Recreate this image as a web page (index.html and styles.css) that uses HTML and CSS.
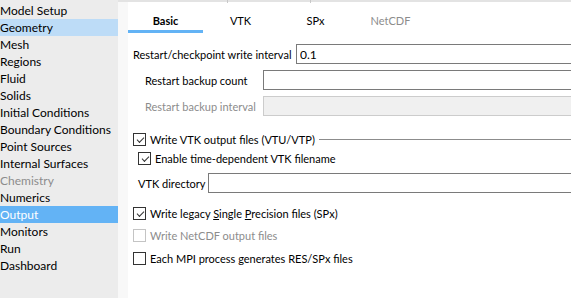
FILE: index.html
```html
<!DOCTYPE html>
<html lang="en">
<head>
  <meta charset="UTF-8">
  <title>Output</title>
  <link rel="stylesheet" href="styles.css">
</head>
<body>
  <div class="sidebar">
    <div class="nav-item">Model Setup</div>
    <div class="nav-item hover">Geometry</div>
    <div class="nav-item">Mesh</div>
    <div class="nav-item">Regions</div>
    <div class="nav-item">Fluid</div>
    <div class="nav-item">Solids</div>
    <div class="nav-item">Initial Conditions</div>
    <div class="nav-item">Boundary Conditions</div>
    <div class="nav-item">Point Sources</div>
    <div class="nav-item">Internal Surfaces</div>
    <div class="nav-item disabled">Chemistry</div>
    <div class="nav-item">Numerics</div>
    <div class="nav-item selected">Output</div>
    <div class="nav-item">Monitors</div>
    <div class="nav-item">Run</div>
    <div class="nav-item">Dashboard</div>
  </div>
  <div class="gutter"></div>
  <div class="main">
    <div class="tabs">
      <div class="tab active">Basic</div>
      <div class="tab">VTK</div>
      <div class="tab">SPx</div>
      <div class="tab disabled">NetCDF</div>
    </div>
    <div class="form">
      <div class="field-row first">
        <label class="label-wide">Restart/checkpoint write interval</label>
        <input class="text-input" type="text" value="0.1">
      </div>
      <div class="field-row indent">
        <label class="label-narrow">Restart backup count</label>
        <input class="text-input" type="text" value="">
      </div>
      <div class="field-row indent">
        <label class="label-narrow disabled">Restart backup interval</label>
        <input class="text-input" type="text" value="" disabled>
      </div>

      <div class="check-row group vtk">
        <span class="box checked"></span>
        <span class="check-text">Write VTK output files (VTU/VTP)</span>
        <span class="group-line"></span>
      </div>
      <div class="check-row sub">
        <span class="box checked"></span>
        <span class="check-text">Enable time-dependent VTK filename</span>
      </div>
      <div class="field-row dir">
        <label class="label-dir">VTK directory</label>
        <input class="text-input" type="text" value="">
      </div>

      <div class="check-row spx">
        <span class="box checked"></span>
        <span class="check-text">Write legacy <u>S</u>ingle <u>P</u>recision files (SPx)</span>
      </div>
      <div class="check-row netcdf disabled">
        <span class="box"></span>
        <span class="check-text">Write NetCDF output files</span>
      </div>
      <div class="check-row mpi">
        <span class="box"></span>
        <span class="check-text">Each MPI process generates RES/SPx files</span>
      </div>
    </div>
  </div>
</body>
</html>
```

FILE: styles.css
```css
body {
  font-family: Lato, "Liberation Sans", sans-serif;
  font-size: 12px;
  color: #000;
  margin: 0;
  padding: 0;
  display: flex;
  width: 571px;
  height: 298px;
  overflow: hidden;
  background-color: white;
}

.sidebar {
  width: 118px;
  flex: none;
  background-color: #ececec;
  padding-top: 2px;
}
.nav-item {
  height: 17px;
  line-height: 17px;
  white-space: nowrap;
  padding-left: 0;
}
.nav-item.hover {
  background-color: #bddcf7;
}
.nav-item.selected {
  background-color: #63b3f5;
  color: white;
}
.nav-item.disabled {
  color: #8c8c8c;
}

.gutter {
  width: 10px;
  flex: none;
  background-color: #f8f8f8;
  border-top: 2px solid #e3e3e3;
}

.main {
  flex: 1;
  font-size: 11px;
  border-top: 2px solid #e3e3e3;
  position: relative;
}
.main::before,
.main::after {
  content: "";
  position: absolute;
  top: -2px;
  width: 1px;
  height: 3px;
  background-color: #c8c8c8;
}
.main::before { left: 99px; }
.main::after { left: 182px; }

.tabs {
  display: flex;
  height: 31px;
}
.tab {
  width: 75px;
  text-align: center;
  line-height: 37px;
  height: 28px;
  border-bottom: 3px solid transparent;
}
.tab.active {
  font-weight: bold;
  border-bottom-color: #63b3f5;
}
.tab.disabled {
  color: #8c8c8c;
}

.form {
  padding-top: 11px;
}

.field-row {
  display: flex;
  align-items: center;
  height: 20px;
  margin-top: 6px;
}
.field-row.first {
  margin-top: 0;
  padding-left: 5px;
}
.field-row.indent {
  padding-left: 17px;
}
.field-row.dir {
  padding-left: 10px;
  margin-top: 5px;
}
.label-wide {
  width: 163px;
  flex: none;
  white-space: nowrap;
}
.label-narrow {
  width: 118px;
  flex: none;
  white-space: nowrap;
}
.label-dir {
  width: 70px;
  flex: none;
  white-space: nowrap;
}
.disabled {
  color: #8c8c8c;
}

.text-input {
  flex: 1;
  height: 20px;
  box-sizing: border-box;
  border: 1px solid #7a7a7a;
  border-right: none;
  padding: 0 3px;
  font-family: Lato, "Liberation Sans", sans-serif;
  font-size: 12px;
  color: #000;
  background-color: white;
  outline: none;
}
.text-input:disabled {
  background-color: #f0f0f0;
  border-color: #cccccc;
}

.check-row {
  display: flex;
  align-items: center;
  height: 19px;
  padding-left: 5px;
  white-space: nowrap;
}
.check-row.vtk {
  margin-top: 14px;
}
.check-row.sub {
  padding-left: 10px;
}
.check-row.spx {
  margin-top: 11px;
}
.check-row.netcdf {
  margin-top: 3px;
}
.check-row.mpi {
  margin-top: 4px;
}
.check-text {
  margin-left: 4px;
}

.box {
  width: 13px;
  height: 13px;
  box-sizing: border-box;
  border: 1px solid #333333;
  background-color: white;
  flex: none;
  position: relative;
}
.box.checked::after {
  content: "";
  position: absolute;
  left: 3px;
  top: 0px;
  width: 6px;
  height: 3px;
  border-left: 1px solid #333333;
  border-bottom: 1px solid #333333;
  transform: translate(0, 3px) rotate(-45deg);
  transform-origin: center;
}
.check-row.disabled .box {
  border-color: #c4c4c4;
}

.group-line {
  flex: 1;
  height: 1px;
  background-color: #8c8c8c;
  margin-left: 4px;
}
```
